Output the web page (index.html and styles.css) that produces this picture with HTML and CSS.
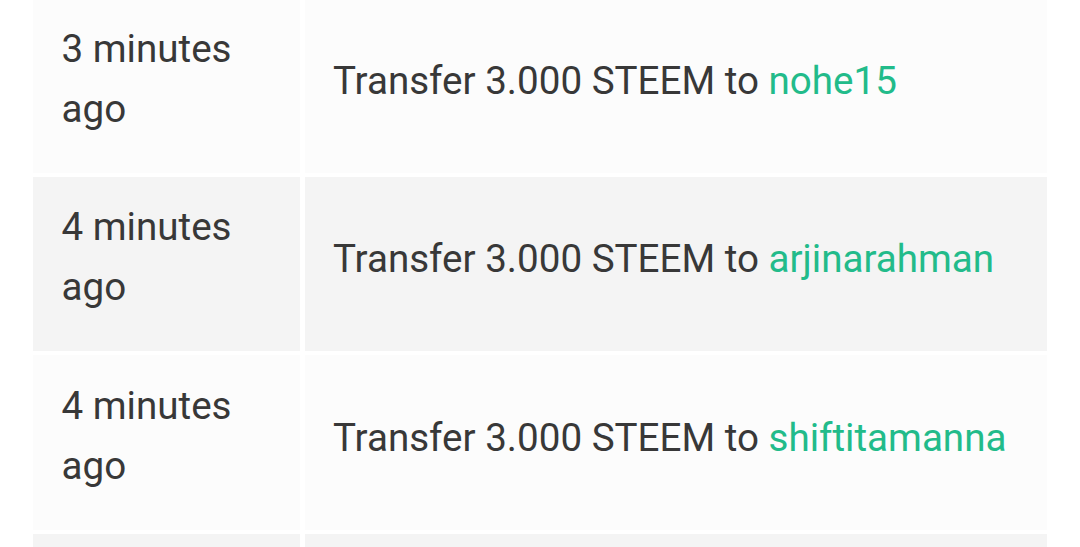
FILE: index.html
```html
<!DOCTYPE html>
<html lang="en">
<head>
<meta charset="utf-8">
<title>Transfers</title>
<link rel="stylesheet" href="styles.css">
</head>
<body>
<div class="history">
  <div class="cell time odd">3 minutes<br>ago</div>
  <div class="cell op odd"><span>Transfer 3.000 STEEM to <a class="user" href="#">nohe15</a></span></div>

  <div class="cell time even">4 minutes<br>ago</div>
  <div class="cell op even"><span>Transfer 3.000 STEEM to <a class="user" href="#">arjinarahman</a></span></div>

  <div class="cell time odd">4 minutes<br>ago</div>
  <div class="cell op odd"><span>Transfer 3.000 STEEM to <a class="user" href="#">shiftitamanna</a></span></div>

  <div class="cell time even empty"></div>
  <div class="cell op even empty"></div>
</div>
</body>
</html>
```

FILE: styles.css
```css
html, body {
  margin: 0;
  padding: 0;
  background: #ffffff;
  overflow: hidden;
}

body {
  font-family: Roboto, "Liberation Sans", sans-serif;
  color: #383838;
}

.history {
  display: grid;
  grid-template-columns: 267px 1fr;
  column-gap: 5px;
  row-gap: 4px;
  padding: 0 33px;
  margin-top: -2px;
}

.cell {
  font-size: 38.6px;
  line-height: 60px;
  padding: 20.5px 28px 34px 28.5px;
  display: flex;
  align-items: center;
  white-space: nowrap;
}

.time {
  align-items: flex-start;
}

.op {
  padding-top: 24.5px;
  padding-left: 28px;
}

.empty {
  min-height: 120px;
}

.odd {
  background: #fcfcfc;
}

.even {
  background: #f4f4f4;
}

.user {
  color: #22bb8a;
  text-decoration: none;
}
```
